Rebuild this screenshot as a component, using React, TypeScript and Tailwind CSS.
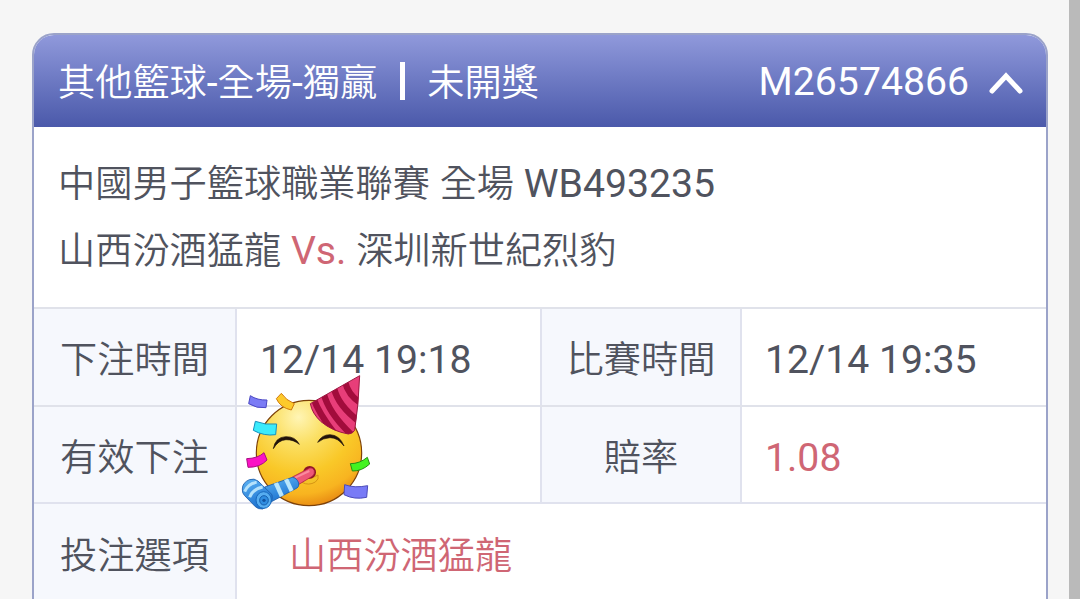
import type { ReactNode } from "react";

type CellProps = {
  children?: ReactNode;
  className?: string;
};

// Chinese glyphs sit slightly smaller than the Latin ones beside them
function Han({ children }: { children: ReactNode }) {
  return (
    <span className="font-['Noto_Sans_CJK_TC',sans-serif] text-[37.2px] font-[350]">
      {children}
    </span>
  );
}

function LabelCell({ children, className = "" }: CellProps) {
  return (
    <div
      className={`flex items-center justify-center border-r-2 border-[#e0e2ee] bg-[#f6f8fd] ${className}`}
    >
      <Han>{children}</Han>
    </div>
  );
}

function ValueCell({ children, className = "" }: CellProps) {
  return (
    <div className={`flex items-center pl-[23px] ${className}`}>{children}</div>
  );
}

function PartyFace() {
  return (
    <svg
      viewBox="0 0 450 435"
      className="absolute -top-[37px] -left-[7px] z-10 h-[145px] w-[150px]"
    >
      <defs>
        <radialGradient id="face" cx="0.4" cy="0.16" r="0.86">
          <stop offset="0" stopColor="#fff5b5" />
          <stop offset="0.3" stopColor="#fbdf62" />
          <stop offset="0.62" stopColor="#f9c828" />
          <stop offset="0.85" stopColor="#f8b420" />
          <stop offset="1" stopColor="#e88a12" />
        </radialGradient>
        <linearGradient id="horn" x1="0" y1="0" x2="0.4" y2="1">
          <stop offset="0" stopColor="#5cb4f5" />
          <stop offset="1" stopColor="#1d72cf" />
        </linearGradient>
        <clipPath id="hatShape">
          <path d="M389 17 241 101Q246 130 273 155Q308 184 355 192Q369 191 374 181Q386 105 389 17Z" />
        </clipPath>
        <clipPath id="tubeShape">
          <path d="M106 350 189 320 208 351 122 396Z" />
        </clipPath>
      </defs>

      <circle
        cx="237"
        cy="249"
        r="158"
        fill="url(#face)"
        stroke="#7d4108"
        strokeWidth="3.5"
      />

      {/* Eyes */}
      <g fill="#21120a" stroke="#21120a" strokeWidth="2">
        <path d="M130 236Q136 201 167 200Q196 199 208 223Q192 209 168 209Q145 210 130 236Z" />
        <path d="M263 217Q275 194 300 194Q329 195 342 228Q324 203 300 203Q279 204 263 217Z" />
      </g>

      {/* Mouth */}
      <path
        d="M216 337Q236 348 256 336Q268 328 264 315Q247 326 228 327Z"
        fill="#f4c227"
        stroke="#d69514"
        strokeWidth="3"
      />
      <ellipse cx="239" cy="307" rx="19" ry="19" fill="#8c1426" />

      {/* Hat */}
      <g clipPath="url(#hatShape)">
        <path d="M230 10H400V200H230Z" fill="#e83e79" />
        <g fill="none" stroke="#a20c3c" strokeWidth="19">
          <path d="M250 84Q266 130 316 194" />
          <path d="M281 70Q295 128 363 193" />
          <path d="M312 54Q324 108 392 158" />
          <path d="M345 34Q354 77 398 103" />
        </g>
      </g>
      <path
        d="M389 17 241 101Q246 130 273 155Q308 184 355 192Q369 191 374 181Q386 105 389 17Z"
        fill="none"
        stroke="#9c1741"
        strokeWidth="3"
      />

      {/* Party horn */}
      <path
        d="M187 321 239 294Q249 291 253 302Q256 313 245 320L205 344Z"
        fill="#ee5878"
        stroke="#a61b38"
        strokeWidth="2"
      />
      <path d="M196 323 238 303" stroke="#fa8b9f" strokeWidth="6" />
      <path
        d="M104 351 187 322Q201 324 206 339Q208 350 201 354L121 397Z"
        fill="url(#horn)"
        stroke="#1c5ca8"
        strokeWidth="2.5"
      />
      <g clipPath="url(#tubeShape)" stroke="#b9e6fc" strokeWidth="13">
        <path d="M135 333 158 384" />
        <path d="M166 323 190 374" />
      </g>
      <path
        d="M37 357Q37 338 58 329Q73 324 84 333L126 374Q130 393 114 407L98 417Q84 418 76 410L43 376Q36 369 37 357Z"
        fill="url(#horn)"
        stroke="#1c5ca8"
        strokeWidth="2.5"
      />
      <g fill="none" stroke="#b5e2fb" strokeWidth="9">
        <path d="M44 365Q54 340 80 337" />
        <path d="M59 382Q68 357 98 351" />
      </g>
      <ellipse
        cx="101"
        cy="390"
        rx="23"
        ry="25"
        fill="#56adf0"
        stroke="#1769bd"
        strokeWidth="3"
      />
      <ellipse
        cx="102"
        cy="391"
        rx="13"
        ry="14"
        fill="#2f8de0"
        stroke="#155fae"
        strokeWidth="3"
      />
      <circle cx="102" cy="391" r="5" fill="#1253a0" />

      {/* Confetti */}
      <g strokeWidth="3">
        <path
          d="M61 77Q82 91 111 90L108 113Q80 116 56 101Z"
          fill="#7b7cf5"
          stroke="#4b48c4"
        />
        <path
          d="M154 70Q168 91 193 101L184 120Q151 113 139 86Z"
          fill="#fdca2b"
          stroke="#d27a0b"
        />
        <path
          d="M76 154Q106 166 140 162L137 194Q102 199 70 181Z"
          fill="#3bebfb"
          stroke="#168fbd"
        />
        <path
          d="M50 266Q84 265 102 248L111 270Q91 292 54 292Z"
          fill="#fb12c5"
          stroke="#a90e83"
        />
        <path
          d="M361 281Q389 281 412 262L419 282Q395 304 367 303Z"
          fill="#43f321"
          stroke="#268f14"
        />
        <path
          d="M344 344Q373 355 413 347L410 382Q373 390 342 374Z"
          fill="#787af6"
          stroke="#4b4bb9"
        />
      </g>
    </svg>
  );
}

function BetHeader() {
  return (
    <header className="flex h-[92px] items-center justify-between bg-linear-to-b from-[#9099db] to-[#4b59aa] pr-[23px] pl-6 text-white">
      <div className="flex items-center">
        <h1>
          <Han>其他籃球</Han>-<Han>全場</Han>-<Han>獨贏</Han>
        </h1>
        <span className="ml-[23px] h-[38px] w-[5px] bg-white" />
        <span className="ml-[22px]">
          <Han>未開獎</Han>
        </span>
      </div>
      <div className="flex items-center">
        <span className="pt-0.5">M26574866</span>
        <svg
          viewBox="0 0 34 22"
          className="mt-1 ml-5 h-[22px] w-[34px]"
          fill="none"
          stroke="currentColor"
          strokeWidth="5"
          strokeLinecap="round"
          strokeLinejoin="miter"
        >
          <path d="M3 19 17 4 31 19" />
        </svg>
      </div>
    </header>
  );
}

export default function App() {
  return (
    <div className="flex h-[599px] w-[1080px] overflow-hidden bg-[#f6f6f6] font-[Roboto,'Noto_Sans_CJK_TC',sans-serif] text-[39.2px] leading-[56px] whitespace-nowrap text-[#50535e]">
      <main className="flex-1 pt-[33px] pl-8">
        <article className="h-[620px] w-[1016px] overflow-hidden rounded-t-[22px] border-2 border-[#9ba3c9] bg-white">
          <BetHeader />

          {/* Match */}
          <section className="h-[182px] border-b-2 border-[#e0e2ea] pt-[21px] pl-6 leading-[67px]">
            <p className="h-[67px]">
              <Han>中國男子籃球職業聯賽</Han> <Han>全場</Han> WB493235
            </p>
            <p className="h-[67px]">
              <Han>山西汾酒猛龍</Han> <span className="text-[#cf6674]">Vs.</span>{" "}
              <Han>深圳新世紀烈豹</Han>
            </p>
          </section>

          {/* Bet details */}
          <section>
            <div className="grid h-[98px] grid-cols-[203px_303px_202px_1fr] border-b-2 border-[#e0e2ea]">
              <LabelCell>下注時間</LabelCell>
              <ValueCell className="pt-1.5">12/14 19:18</ValueCell>
              <LabelCell className="border-l-2">比賽時間</LabelCell>
              <ValueCell className="pt-1.5">12/14 19:35</ValueCell>
            </div>
            <div className="grid h-[97px] grid-cols-[203px_303px_202px_1fr] border-b-2 border-[#e0e2ee]">
              <LabelCell>有效下注</LabelCell>
              <ValueCell className="relative">
                <PartyFace />
              </ValueCell>
              <LabelCell className="border-l-2">賠率</LabelCell>
              <ValueCell className="pt-1.5 text-[#cf6674]">1.08</ValueCell>
            </div>
            <div className="grid h-[98px] grid-cols-[203px_1fr]">
              <LabelCell>投注選項</LabelCell>
              <ValueCell className="pl-[52px] text-[#cf6674]">
                <Han>山西汾酒猛龍</Han>
              </ValueCell>
            </div>
          </section>
        </article>
      </main>
      <div className="w-[11px] bg-[#bababa]" />
    </div>
  );
}
